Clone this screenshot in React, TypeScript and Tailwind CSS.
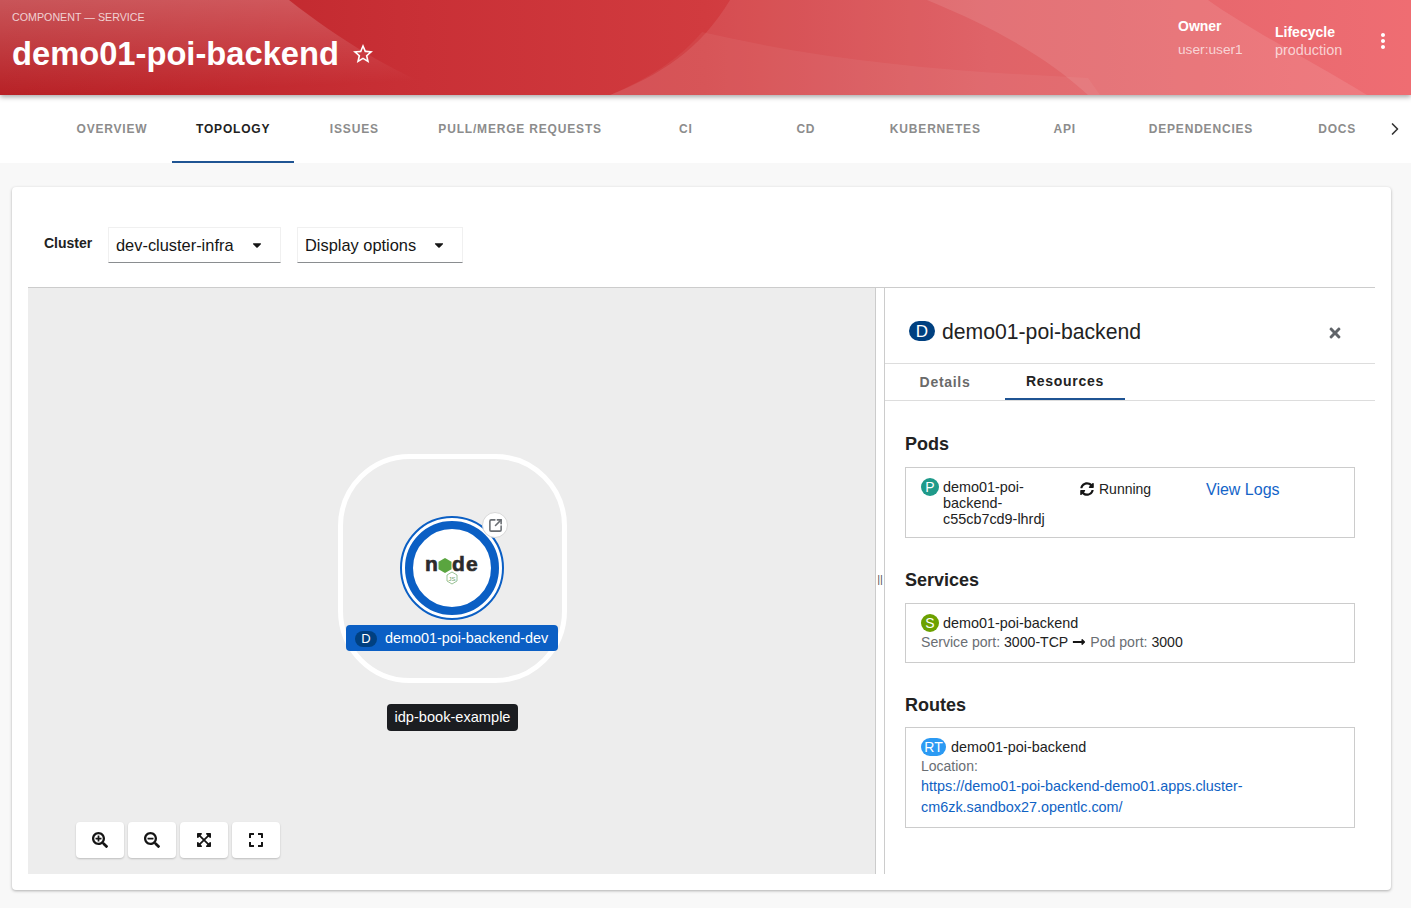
import { ChevronRight, SquareArrowOutUpRight } from "lucide-react";
import {
  FaCaretDown,
  FaExpand,
  FaExpandArrowsAlt,
  FaLongArrowAltRight,
  FaSearchMinus,
  FaSearchPlus,
  FaSyncAlt,
  FaTimes,
} from "react-icons/fa";
import { MdMoreVert, MdStarBorder } from "react-icons/md";

const tabs = [
  "OVERVIEW",
  "TOPOLOGY",
  "ISSUES",
  "PULL/MERGE REQUESTS",
  "CI",
  "CD",
  "KUBERNETES",
  "API",
  "DEPENDENCIES",
  "DOCS",
];

const HeaderWaves = () => (
  <svg className="absolute inset-0 h-full w-full" viewBox="0 0 1411 95" preserveAspectRatio="none">
    <defs>
      <linearGradient id="fade" x1="0" y1="0" x2="0.2" y2="1">
        <stop offset="0" stopColor="#fff" stopOpacity="0.24" />
        <stop offset="1" stopColor="#fff" stopOpacity="0" />
      </linearGradient>
    </defs>
    <path d="M0 0H289C340 40 390 70 450 95H0Z" fill="url(#fade)" />
    <path d="M730 0C700 50 660 75 610 95H1411V0Z" fill="#fff" fillOpacity="0.09" />
    <path d="M702 32C830 62 960 72 1088 78L1100 95H610C650 78 680 58 702 32Z" fill="#fff" fillOpacity="0.05" />
    <path d="M927 0C1000 30 1050 60 1088 95H1367C1310 60 1250 30 1208 0Z" fill="#fff" fillOpacity="0.1" />
  </svg>
);

const NodeLogo = () => (
  <svg width="56" height="36" viewBox="0 0 56 36">
    <g fill="#2b2b2b" stroke="#2b2b2b" strokeWidth="0.6" fontFamily="'Liberation Sans', sans-serif" fontWeight="700" fontSize="21">
      <text x="1" y="21">n</text>
      <text x="28" y="21">d</text>
      <text x="42" y="21">e</text>
    </g>
    <polygon points="21,8 27.5,11.7 27.5,19.3 21,23 14.5,19.3 14.5,11.7" fill="#5aa53f" />
    <polygon points="28,22 33,25 33,31 28,34 23,31 23,25" fill="none" stroke="#7fb27a" strokeWidth="0.8" />
    <text x="28" y="30.5" textAnchor="middle" fontSize="6" fill="#6f9f6a" fontFamily="'Liberation Sans', sans-serif">
      JS
    </text>
  </svg>
);

const Badge = ({ label, className }: { label: string; className: string }) => (
  <span className={`inline-flex h-[18px] items-center justify-center rounded-full text-[14px] leading-none text-white ${className}`}>
    {label}
  </span>
);

const Heading = ({ children }: { children: string }) => (
  <h2 className="text-[18px] leading-[21px] font-bold text-[#222]">{children}</h2>
);

const Select = ({ label, width }: { label: string; width: string }) => (
  <div className={`flex h-9 items-center justify-between border border-[#f0f0f0] border-b-[#8a8d90] pr-4 pl-[7px] text-[16.4px] text-[#151515] ${width}`}>
    <span>{label}</span>
    <FaCaretDown className="h-[14px] w-[14px]" />
  </div>
);

const ZoomButton = ({ children }: { children: React.ReactNode }) => (
  <button className="flex h-9 w-12 items-center justify-center rounded bg-white text-[#151515] shadow-[0_1px_2px_rgba(0,0,0,0.2)]">
    {children}
  </button>
);

export default function App() {
  return (
    <div className="flex min-h-[908px] flex-col overflow-hidden bg-[#f8f8f8] font-['Liberation_Sans',Arial,sans-serif]">
      <header className="relative z-10 flex h-[95px] items-center justify-between bg-[linear-gradient(90deg,#b71f24_0%,#c93036_30%,#d13b3f_50%,#dc5459_70%,#ee5f65_100%)] pr-4 pb-[14px] pl-3 text-white shadow-[0_2px_5px_rgba(0,0,0,0.35)]">
        <HeaderWaves />
        <div className="relative pt-1">
          <div className="text-[10.7px] leading-[14px] text-white/75">COMPONENT — SERVICE</div>
          <div className="mt-[9px] flex items-center gap-3">
            <h1 className="text-[32.7px] leading-[42px] font-bold">demo01-poi-backend</h1>
            <MdStarBorder className="h-6 w-6" />
          </div>
        </div>
        <div className="relative flex items-center">
          <div className="mb-[5px] w-[97px]">
            <div className="text-[14px] leading-[16px] font-bold">Owner</div>
            <div className="mt-2 text-[13.7px] leading-[16px] text-white/70">user:user1</div>
          </div>
          <div className="w-[96px]">
            <div className="text-[14px] leading-[18px] font-bold">Lifecycle</div>
            <div className="text-[14.4px] leading-[18px] text-white/70">production</div>
          </div>
          <MdMoreVert className="h-6 w-6" />
        </div>
      </header>

      <nav className="relative flex h-[68px] items-stretch bg-white pl-[52px]">
        {tabs.map((tab) => (
          <div
            key={tab}
            className={`flex min-w-[120px] items-center justify-center border-b-2 px-6 pt-[2px] text-[12px] font-bold tracking-[0.068em] whitespace-nowrap ${
              tab === "TOPOLOGY" ? "border-[#1f5493] text-[#222]" : "border-transparent text-[#8c8c8c]"
            }`}
          >
            {tab}
          </div>
        ))}
        <ChevronRight className="absolute top-[24px] right-[6px] h-5 w-5 text-[#333]" />
      </nav>

      <main className="mt-6 mr-5 ml-3 flex h-[703px] flex-col rounded bg-white px-4 pb-4 shadow-[0_1px_3px_rgba(0,0,0,0.3)]">
        <div className="flex h-[100px] items-center pt-4">
          <span className="mb-[4px] ml-4 w-[64px] text-[14px] font-bold text-[#222]">Cluster</span>
          <Select label="dev-cluster-infra" width="w-[173px]" />
          <div className="w-4" />
          <Select label="Display options" width="w-[166px]" />
        </div>

        <div className="flex flex-1 border-t border-[#ccc]">
          <div className="relative w-[847px] bg-[#ededed]">
            <div className="absolute top-[166px] left-[310px] h-[229px] w-[229px] rounded-[72px] border-[5px] border-white" />
            <div className="absolute top-[228px] left-[372px] flex h-[104px] w-[104px] items-center justify-center rounded-full border-2 border-[#0b5fc4] bg-white">
              <div className="flex h-[94px] w-[94px] items-center justify-center rounded-full border-[8px] border-[#0b5fc4] bg-white">
                <NodeLogo />
              </div>
            </div>
            <div className="absolute top-[224px] left-[454px] flex h-[26px] w-[26px] items-center justify-center rounded-full border border-[#d8d8d8] bg-white">
              <SquareArrowOutUpRight strokeWidth={2.5} className="h-[15px] w-[15px] text-[#6a6e73]" />
            </div>
            <div className="absolute top-[337px] left-[318px] flex h-[26px] w-[212px] items-center rounded bg-[#0b5fc4] pt-[1px] pl-[9px] text-[14.4px] text-white">
              <span className="flex h-4 w-[22px] items-center justify-center rounded-full bg-[#004080] text-[13px]">D</span>
              <span className="ml-2">demo01-poi-backend-dev</span>
            </div>
            <div className="absolute top-[416px] left-[359px] flex h-[27px] w-[131px] items-center justify-center rounded bg-[#1b1d21] text-[14.6px] text-white">
              idp-book-example
            </div>
            <div className="absolute bottom-4 left-12 flex gap-1">
              <ZoomButton><FaSearchPlus className="h-4 w-4" /></ZoomButton>
              <ZoomButton><FaSearchMinus className="h-4 w-4" /></ZoomButton>
              <ZoomButton><FaExpandArrowsAlt className="h-4 w-4" /></ZoomButton>
              <ZoomButton><FaExpand className="h-4 w-4" /></ZoomButton>
            </div>
          </div>

          <div className="flex w-[10px] items-center justify-center border-x border-[#ccc] bg-white pb-1 text-[11px] leading-none text-[#555]">
            ||
          </div>

          <aside className="flex-1 text-[14px] text-[#222]">
            <div className="flex h-[76px] items-center justify-between border-b border-[#ddd] pt-[12px] pr-[32px] pl-6">
              <div className="flex items-center gap-[7px]">
                <span className="flex h-5 w-[26px] items-center justify-center rounded-full bg-[#004080] text-[17px] text-white">D</span>
                <span className="text-[21.2px] text-[#222]">demo01-poi-backend</span>
              </div>
              <FaTimes className="mt-[2px] h-4 w-4 text-[#5f6368]" />
            </div>
            <div className="flex h-[37px] border-b border-[#ddd] text-[14px] font-bold tracking-[0.05em]">
              <div className="flex w-[120px] items-center justify-center text-[#6a6a6a]">Details</div>
              <div className="flex w-[120px] items-center justify-center border-b-2 border-[#1f5493] text-[#222]">Resources</div>
            </div>

            <section className="px-5 pt-[33px]">
              <Heading>Pods</Heading>
              <div className="mt-3 flex h-[71px] border border-[#ccc] pt-[10px] pl-[15px]">
                <Badge label="P" className="w-[18px] bg-[#1f9a8a]" />
                <div className="ml-1 w-[137px] pt-[1px] text-[14.4px] leading-[16px]">
                  demo01-poi-<br />backend-<br />c55cb7cd9-lhrdj
                </div>
                <div className="flex h-[22px] w-[126px] items-center gap-[5px]">
                  <FaSyncAlt className="h-[14px] w-[14px] text-[#151515]" />
                  <span>Running</span>
                </div>
                <span className="text-[16px] leading-[24px] text-[#1464c8]">View Logs</span>
              </div>

              <div className="mt-[32px]">
                <Heading>Services</Heading>
              </div>
              <div className="mt-3 h-[60px] border border-[#ccc] pt-[9px] pl-[15px]">
                <div className="flex items-center gap-1">
                  <Badge label="S" className="-mt-[1px] w-[18px] bg-[#6ca100]" />
                  <span className="text-[14.4px] leading-[21px]">demo01-poi-backend</span>
                </div>
                <div className="flex items-center text-[14.1px] leading-[16px] text-[#6a6e73]">
                  Service port:&nbsp;<span className="text-[#222]">3000-TCP</span>
                  <FaLongArrowAltRight className="mx-1 h-[14px] w-[14px] text-[#151515]" />
                  Pod port:&nbsp;<span className="text-[#222]">3000</span>
                </div>
              </div>

              <div className="mt-[32px]">
                <Heading>Routes</Heading>
              </div>
              <div className="mt-[11px] h-[101px] border border-[#ccc] pt-[9px] pl-[15px]">
                <div className="flex items-center gap-[5px]">
                  <Badge label="RT" className="-mt-[1px] w-[25px] bg-[#2b9af3]" />
                  <span className="text-[14.4px] leading-[21px]">demo01-poi-backend</span>
                </div>
                <div className="leading-[16px] text-[#6a6e73]">Location:</div>
                <div className="mt-[2px] w-[340px] text-[14.4px] leading-[21px] text-[#0f62c4]">
                  https://demo01-poi-backend-demo01.apps.cluster-cm6zk.sandbox27.opentlc.com/
                </div>
              </div>
            </section>
          </aside>
        </div>
      </main>
    </div>
  );
}
